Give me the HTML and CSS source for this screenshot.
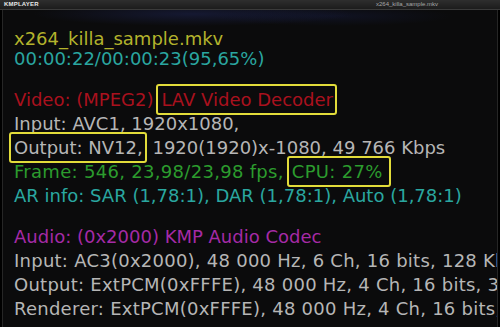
FILE: index.html
```html
<!DOCTYPE html>
<html lang="en">
<head>
    <meta charset="UTF-8">
    <meta name="viewport" content="width=device-width, initial-scale=1.0">
    <title>KMPlayer - x264_killa_sample.mkv</title>
    <link rel="stylesheet" href="styles.css">
</head>
<body>
    <div class="player">
        <div class="titlebar">
            <span class="brand">KMPLAYER</span>
            <span class="file">x264_killa_sample.mkv</span>
        </div>
        <div class="screen">
            <div class="osd">
                <section class="block head">
                    <div class="line name">x264_killa_sample.mkv</div>
                    <div class="line time">00:00:22/00:00:23(95,65%)</div>
                </section>
                <section class="block">
                    <div class="line video">Video: (MPEG2)<span class="mark mark-lav">LAV Video Decoder</span></div>
                    <div class="line info">Input: AVC1, 1920x1080,</div>
                    <div class="line info"><span class="mark mark-out">Output: NV12,</span> 1920(1920)x-1080, 49 766 Kbps</div>
                    <div class="line frame">Frame: 546, 23,98/23,98 fps,<span class="mark mark-cpu">CPU: 27%</span></div>
                    <div class="line aspect">AR info: SAR (1,78:1), DAR (1,78:1), Auto (1,78:1)</div>
                </section>
                <section class="block audio-block">
                    <div class="line audio">Audio: (0x2000) KMP Audio Codec</div>
                    <div class="line info">Input: AC3(0x2000), 48 000 Hz, 6 Ch, 16 bits, 128 Kbps</div>
                    <div class="line info">Output: ExtPCM(0xFFFE), 48 000 Hz, 4 Ch, 16 bits, 3 072 Kbps</div>
                    <div class="line info">Renderer: ExtPCM(0xFFFE), 48 000 Hz, 4 Ch, 16 bits, 3 072 Kbps</div>
                </section>
            </div>
        </div>
    </div>
</body>
</html>
```

FILE: styles.css
```css
html, body {
    margin: 0;
    padding: 0;
    background-color: #000;
}
body {
    width: 500px;
    height: 327px;
    overflow: hidden;
}
.player {
    display: flex;
    flex-direction: column;
    height: 100%;
}
.titlebar {
    display: flex;
    align-items: center;
    height: 9px;
    padding-left: 4px;
    background: linear-gradient(#2e2e2e, #1c1c1c);
    border-bottom: 1px solid #3a3a3a;
    font-family: "Liberation Sans", Arial, sans-serif;
    font-size: 6px;
    line-height: 9px;
}
.brand {
    color: #e8e8e8;
    font-weight: bold;
    letter-spacing: 0.2px;
}
.file {
    margin-left: auto;
    margin-right: 62px;
    color: #a8a8a8;
}
.screen {
    flex: 1;
    margin: 0 2px;
    border-left: 1px solid #262626;
    border-right: 1px solid #262626;
    background:
        radial-gradient(ellipse 160px 12px at 190px 4px, rgba(40, 50, 120, 0.35), transparent),
        radial-gradient(ellipse 120px 10px at 330px 6px, rgba(30, 40, 100, 0.25), transparent),
        #0b0b0c;
    overflow: hidden;
}
.osd {
    padding: 19px 0 0 11px;
    font-family: "DejaVu Sans", Verdana, sans-serif;
    font-size: 18px;
    white-space: nowrap;
}
.line {
    height: 24px;
    line-height: 24px;
}
.head .line {
    height: 20px;
    line-height: 20px;
}
.head {
    margin-bottom: 19px;
}
.block + .block {
    margin-top: 17px;
}
.audio-block .info {
    letter-spacing: 0.25px;
}
.name {
    color: #b3b32c;
}
.time {
    color: #2aa6a0;
}
.video {
    color: #a9111e;
}
.info {
    color: #b6b6b6;
}
.frame {
    color: #2c9c2e;
    letter-spacing: 0.3px;
}
.aspect {
    color: #2aa7a0;
}
.audio {
    color: #a52aa6;
}
.mark {
    border: 2px solid #e2dc3a;
    border-radius: 3px;
    padding: 3px 2px 3px 3px;
}
.mark-lav {
    margin-left: 3px;
}
.mark-out {
    margin-left: -5px;
    padding-left: 3px;
}
.mark-cpu {
    margin-left: 3px;
    padding-right: 6px;
}
```
